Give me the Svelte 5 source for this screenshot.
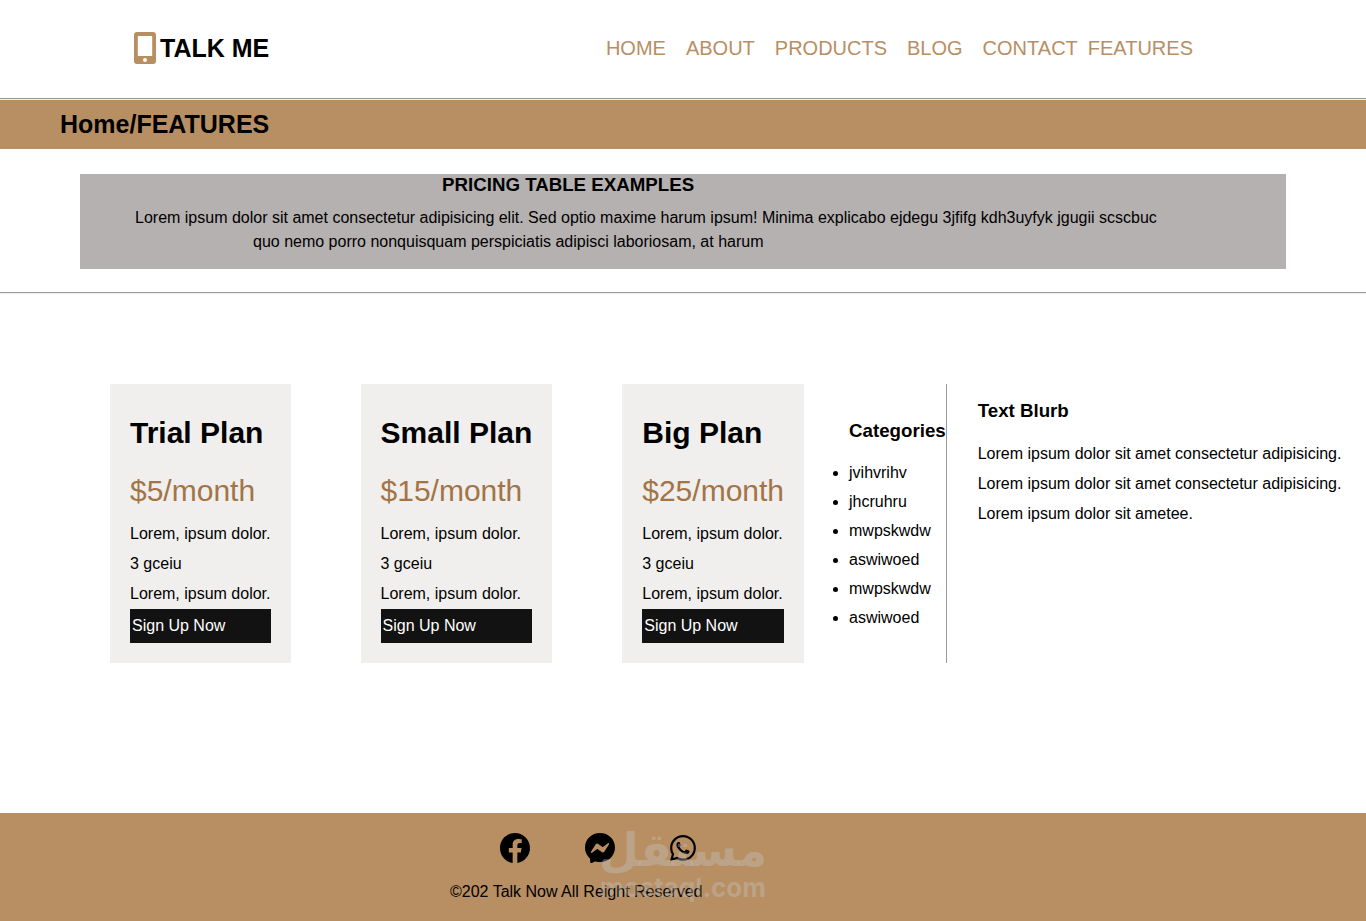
<script>
    const links = ['HOME', 'ABOUT', 'PRODUCTS', 'BLOG', 'CONTACT', 'FEATURES'];

    const plans = [
        { name: 'Trial Plan', price: '$5/month' },
        { name: 'Small Plan', price: '$15/month' },
        { name: 'Big Plan', price: '$25/month' }
    ];

    const features = ['Lorem, ipsum dolor.', '3 gceiu', 'Lorem, ipsum dolor.'];

    const categories = ['jvihvrihv', 'jhcruhru', 'mwpskwdw', 'aswiwoed', 'mwpskwdw', 'aswiwoed'];

    const blurb = [
        'Lorem ipsum dolor sit amet consectetur adipisicing.',
        'Lorem ipsum dolor sit amet consectetur adipisicing.',
        'Lorem ipsum dolor sit ametee.'
    ];
</script>

<header>
    <div class="logo">
        <svg width="22" height="32" viewBox="0 0 22 32" aria-hidden="true">
            <path fill-rule="evenodd" d="M3 0h16a3 3 0 0 1 3 3v26a3 3 0 0 1-3 3H3a3 3 0 0 1-3-3V3a3 3 0 0 1 3-3zm1.500 4a.7.7 0 0 0-.7.700v18.600a.7.7 0 0 0 .7.700h13a.7.7 0 0 0 .7-.700V4.700a.7.7 0 0 0-.7-.700zM11 26a2 2 0 1 0 0 4 2 2 0 0 0 0-4z"/>
        </svg>
        <span>TALK ME</span>
    </div>
    <nav>
        {#each links as link}
            <a href="#{link.toLowerCase()}">{link}</a>
        {/each}
    </nav>
</header>
<hr>

<h2 class="breadcrumb">Home/FEATURES</h2>

<section class="intro">
    <h3>PRICING TABLE EXAMPLES</h3>
    <p>Lorem ipsum dolor sit amet consectetur adipisicing elit. Sed optio maxime harum ipsum! Minima explicabo ejdegu 3jfifg kdh3uyfyk jgugii scscbuc</p>
    <p class="second">quo nemo porro nonquisquam perspiciatis adipisci laboriosam, at harum</p>
</section>
<hr>

<main>
    <div class="plans">
        {#each plans as plan}
            <div class="card">
                <h1>{plan.name}</h1>
                <div class="price">{plan.price}</div>
                {#each features as feature}
                    <p>{feature}</p>
                {/each}
                <button type="button">Sign Up Now</button>
            </div>
        {/each}
    </div>
    <div class="categories">
        <h3>Categories</h3>
        <ul>
            {#each categories as category}
                <li>{category}</li>
            {/each}
        </ul>
    </div>
    <div class="blurb">
        <h3>Text Blurb</h3>
        {#each blurb as line}
            <p>{line}</p>
        {/each}
    </div>
</main>

<footer>
    <div class="social">
        <a href="#facebook" aria-label="Facebook">
            <svg width="30" height="30" viewBox="0 0 16 16">
                <path d="M16 8.049c0-4.446-3.582-8.050-8-8.050C3.580 0-.002 3.603-.002 8.050c0 4.017 2.926 7.347 6.750 7.951v-5.625h-2.030V8.050H6.750V6.275c0-2.017 1.195-3.131 3.022-3.131.876 0 1.791.157 1.791.157v1.980h-1.009c-.993 0-1.303.621-1.303 1.258v1.510h2.218l-.354 2.326H9.250V16c3.824-.604 6.750-3.934 6.750-7.951"/>
            </svg>
        </a>
        <a href="#messenger" aria-label="Messenger">
            <svg width="30" height="30" viewBox="0 0 16 16">
                <path d="M0 7.760C0 3.301 3.493 0 8 0s8 3.301 8 7.760-3.493 7.760-8 7.760c-.81 0-1.586-.107-2.316-.307a.639.639 0 0 0-.427.030l-1.588.702a.64.64 0 0 1-.898-.566l-.044-1.423a.639.639 0 0 0-.215-.456C.956 12.108 0 10.092 0 7.760m5.546-1.459-2.350 3.728c-.225.358.214.761.551.506l2.525-1.916a.48.48 0 0 1 .578-.002l1.869 1.402a1.200 1.200 0 0 0 1.735-.32l2.350-3.728c.226-.358-.214-.761-.551-.506L9.728 7.381a.48.48 0 0 1-.578.002L7.281 5.980a1.200 1.200 0 0 0-1.735.32z"/>
            </svg>
        </a>
        <a href="#whatsapp" aria-label="WhatsApp">
            <svg width="26" height="26" viewBox="0 0 16 16">
                <path d="M13.601 2.326A7.850 7.850 0 0 0 7.994 0C3.627 0 .068 3.558.064 7.926c0 1.399.366 2.760 1.057 3.965L0 16l4.204-1.102a7.900 7.900 0 0 0 3.790.965h.004c4.368 0 7.926-3.558 7.930-7.930A7.900 7.900 0 0 0 13.600 2.326zM7.994 14.521a6.600 6.600 0 0 1-3.356-.92l-.24-.144-2.494.654.666-2.433-.156-.251a6.560 6.560 0 0 1-1.007-3.505c0-3.626 2.957-6.584 6.591-6.584a6.560 6.560 0 0 1 4.660 1.931 6.560 6.560 0 0 1 1.928 4.660c-.004 3.639-2.961 6.592-6.592 6.592m3.615-4.934c-.197-.099-1.170-.578-1.353-.646-.182-.065-.315-.099-.445.099-.133.197-.513.646-.627.775-.114.133-.232.148-.43.050-.197-.1-.836-.308-1.592-.985-.59-.525-.985-1.175-1.103-1.372-.114-.198-.011-.304.088-.403.087-.088.197-.232.296-.346.1-.114.133-.198.198-.33.065-.134.034-.248-.015-.347-.05-.099-.445-1.076-.612-1.470-.16-.389-.323-.335-.445-.34-.114-.007-.247-.007-.38-.007a.73.73 0 0 0-.529.247c-.182.198-.691.677-.691 1.654s.71 1.916.81 2.049c.098.133 1.394 2.132 3.383 2.992.47.205.84.326 1.129.418.475.152.904.129 1.246.080.38-.058 1.171-.48 1.338-.943.164-.464.164-.86.114-.943-.049-.084-.182-.133-.38-.232"/>
            </svg>
        </a>
    </div>
    <p>©202 Talk Now All Reight Reserved</p>
    <div class="watermark">
        <span class="arabic" lang="ar" dir="rtl">مستقل</span>
        <span class="latin">mostaql.com</span>
    </div>
</footer>

<style>
    :global(body) {
        margin: 0;
        background-color: #fff;
        color: #000;
        font-family: Arial, "Liberation Sans", sans-serif;
        font-size: 16px;
    }

    h1, h2, h3, p, ul {
        margin: 0;
    }

    h3 {
        line-height: 22px;
    }

    hr {
        margin: 0;
        border: 0;
        border-top: 1px solid #9a9a9a;
        border-bottom: 1px solid #eee;
    }

    header {
        display: flex;
        align-items: center;
        justify-content: space-between;
        padding: 32px 173px 34px 134px;
    }

    .logo {
        display: flex;
        align-items: center;
        gap: 4px;
        font-size: 25px;
        font-weight: bold;
    }

    .logo svg {
        fill: #b88e63;
    }

    nav {
        display: flex;
        gap: 20px;
    }

    nav a {
        color: #b88e63;
        font-size: 20px;
        text-decoration: none;
    }

    nav a:last-child {
        margin-left: -10px;
    }

    .breadcrumb {
        padding: 0 60px;
        background-color: #b88e63;
        font-size: 25px;
        line-height: 49px;
    }

    .intro {
        margin: 25px 80px 23px;
        padding-bottom: 15px;
        background-color: #b5b1b0;
    }

    .intro h3 {
        padding-left: 362px;
        margin-bottom: 10px;
    }

    .intro p {
        padding-left: 55px;
        line-height: 24px;
    }

    .intro .second {
        padding-left: 173px;
    }

    main {
        display: flex;
        padding: 90px 20px 150px 110px;
    }

    .plans {
        display: flex;
        gap: 70px;
    }

    .card {
        padding: 20px;
        background-color: #f0efed;
    }

    .card h1 {
        font-size: 30px;
        line-height: 58px;
        white-space: nowrap;
    }

    .price {
        color: #a27446;
        font-size: 30px;
        line-height: 57px;
    }

    .card p, .blurb p {
        line-height: 30px;
        white-space: nowrap;
    }

    .card button {
        display: block;
        width: 100%;
        height: 34px;
        padding: 0 2px;
        border: 0;
        background-color: #121212;
        color: #fff;
        font-family: inherit;
        font-size: 16px;
        text-align: left;
    }

    .categories {
        padding: 36px 0 0 45px;
        border-right: 1px solid #9a9a9a;
    }

    .categories h3 {
        margin-bottom: 16px;
    }

    .categories ul {
        padding: 0;
    }

    .categories li {
        line-height: 29px;
    }

    .blurb {
        padding: 16px 0 0 31px;
    }

    .blurb h3 {
        margin-bottom: 17px;
    }

    footer {
        position: relative;
        padding: 20px 0 18px 450px;
        background-color: #b88e63;
    }

    .social {
        display: flex;
        align-items: center;
        gap: 55px;
        height: 30px;
        padding-left: 50px;
    }

    .social a {
        display: flex;
        color: #000;
    }

    .social svg {
        fill: currentColor;
    }

    footer p {
        margin-top: 18px;
        line-height: 22px;
    }

    /* translucent site mark over the footer */
    .watermark {
        position: absolute;
        top: 14px;
        left: 601px;
        display: flex;
        flex-direction: column;
        align-items: center;
        width: 164px;
        color: rgba(196, 196, 196, 0.4);
        font-weight: bold;
        white-space: nowrap;
        pointer-events: none;
    }

    .arabic {
        font-family: "DejaVu Sans", sans-serif;
        font-size: 46px;
        line-height: 46px;
    }

    .latin {
        font-family: Inter, sans-serif;
        font-size: 26px;
        line-height: 30px;
    }
</style>
